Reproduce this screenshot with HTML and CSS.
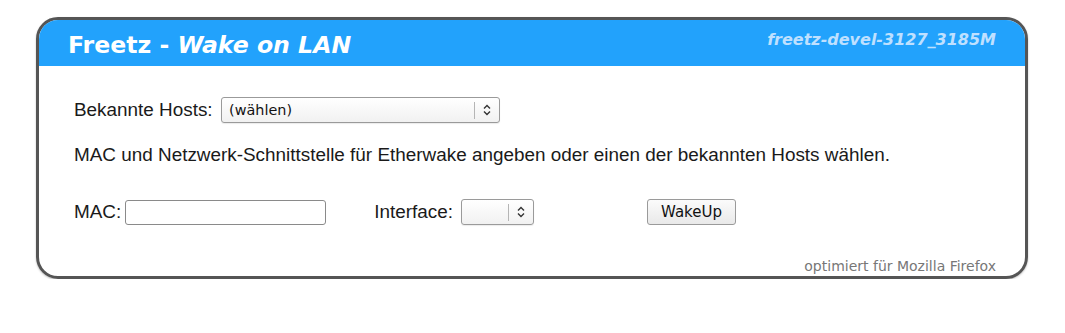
FILE: index.html
```html
<!DOCTYPE html>
<html>
<head>
<meta charset="utf-8">
<link rel="stylesheet" href="styles.css">
</head>
<body>
<div class="box">
  <div class="header">
    <div class="title">Freetz - <i>Wake on LAN</i></div>
    <div class="version">freetz-devel-3127_3185M</div>
  </div>
  <div class="content">
    <div class="row row-hosts">
      <span class="label label-hosts">Bekannte Hosts:</span>
      <span class="select select-hosts">
        <span class="select-text">(wählen)</span>
        <span class="select-btn"><svg width="8" height="12" viewBox="0 0 8 12"><path d="M1 4.5 L4 1.5 L7 4.5 M1 7.5 L4 10.5 L7 7.5" fill="none" stroke="#333" stroke-width="1.4"/></svg></span>
      </span>
    </div>
    <p class="info">MAC und Netzwerk-Schnittstelle für Etherwake angeben oder einen der bekannten Hosts wählen.</p>
    <div class="row row-form">
      <span class="label label-mac">MAC:</span>
      <span class="input"></span>
      <span class="label label-if">Interface:</span>
      <span class="select select-if">
        <span class="select-text"></span>
        <span class="select-btn"><svg width="8" height="12" viewBox="0 0 8 12"><path d="M1 4.5 L4 1.5 L7 4.5 M1 7.5 L4 10.5 L7 7.5" fill="none" stroke="#333" stroke-width="1.4"/></svg></span>
      </span>
      <span class="button">WakeUp</span>
    </div>
  </div>
  <div class="footer">optimiert für Mozilla Firefox</div>
</div>
</body>
</html>
```
FILE: styles.css
```css
html, body {
  margin: 0;
  padding: 0;
  background: #ffffff;
}
body {
  padding: 17px 0 0 36px;
}
.box {
  width: 986px;
  height: 256px;
  border: 3px solid #555555;
  border-radius: 22px;
  overflow: hidden;
  box-shadow: 0 1px 2px rgba(0,0,0,0.25);
  display: flex;
  flex-direction: column;
}
.header {
  background: #22a2fc;
  height: 46px;
  flex: none;
  display: flex;
  align-items: center;
  justify-content: space-between;
  padding: 0 29px 0 29px;
}
.title {
  font-family: "DejaVu Sans", sans-serif;
  font-weight: bold;
  font-size: 23.6px;
  color: #ffffff;
  margin-top: 4px;
}
.title i {
  font-style: italic;
}
.version {
  font-family: "DejaVu Sans", sans-serif;
  font-weight: bold;
  font-style: italic;
  font-size: 16px;
  color: #bfe0ff;
  margin-top: -7px;
}
.content {
  flex: 1;
  padding: 31px 0 0 35px;
  font-family: "Liberation Sans", Arial, sans-serif;
  font-size: 18.9px;
  color: #1a1a1a;
}
.row {
  display: flex;
  align-items: center;
}
.label-hosts {
  margin-right: 8.5px;
}
.label-mac {
  margin-right: 4px;
}
.label-if {
  margin-right: 8px;
}
.info {
  margin: 21px 0 0 0;
  line-height: 22px;
}
.row-form {
  margin-top: 33px;
}
.select {
  display: flex;
  align-items: center;
  box-sizing: border-box;
  height: 26px;
  border: 1px solid #9a9a9a;
  border-radius: 3px;
  background: linear-gradient(#ffffff, #f1f1f1);
  box-shadow: 0 1px 1px rgba(0,0,0,0.08);
  font-family: "DejaVu Sans", sans-serif;
  font-size: 14.4px;
  color: #111;
}
.select-text {
  flex: 1;
  padding-left: 7px;
}
.select-btn {
  width: 24px;
  height: 17px;
  border-left: 1px solid #b5b5b5;
  display: flex;
  align-items: center;
  justify-content: center;
}
.select-hosts {
  width: 279px;
}
.select-if {
  width: 73px;
}
.input {
  box-sizing: border-box;
  width: 201px;
  height: 25px;
  border: 1px solid #8a8a8a;
  border-radius: 3px;
  background: #fff;
  margin-right: 48px;
}
.button {
  box-sizing: border-box;
  margin-left: 113px;
  width: 89px;
  height: 26px;
  border: 1px solid #9a9a9a;
  border-radius: 3px;
  background: linear-gradient(#fbfbfb, #e9e9e9);
  font-family: "DejaVu Sans", sans-serif;
  font-size: 15px;
  color: #111;
  display: flex;
  align-items: center;
  justify-content: center;
}
.footer {
  flex: none;
  text-align: right;
  padding: 0 29px 2px 0;
  font-family: "DejaVu Sans", sans-serif;
  font-size: 14px;
  color: #777777;
}
```
